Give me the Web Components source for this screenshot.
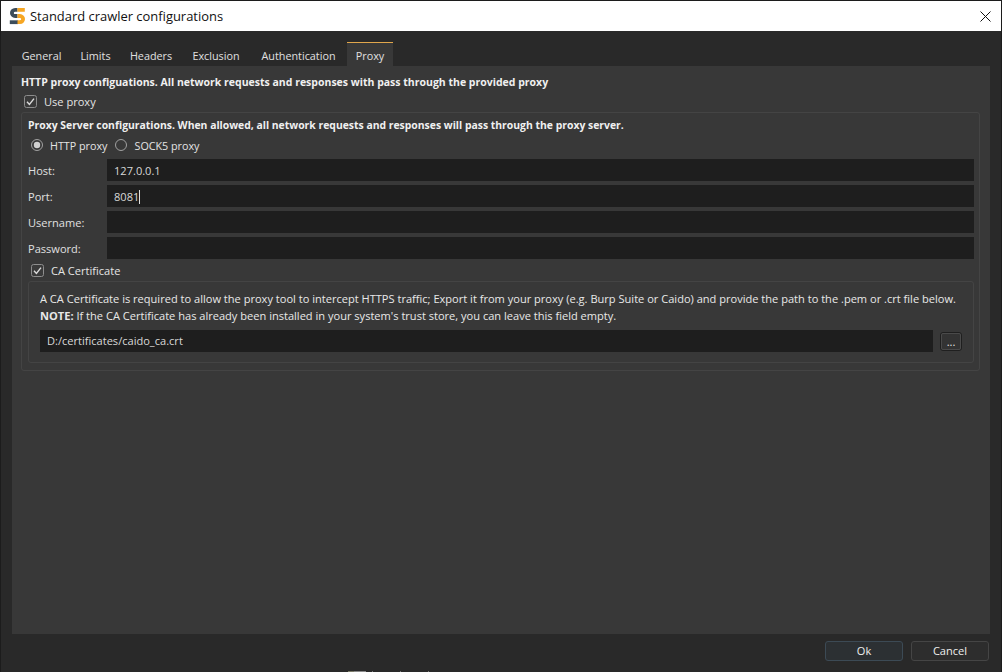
<!DOCTYPE html>
<html>
<head>
<meta charset="utf-8">
<title>Standard crawler configurations</title>
<style>
  html, body { margin: 0; height: 100%; background: #292929; }
  body { font: 11.07px "Open Sans", "Noto Sans", sans-serif; color: #e6e6e6; overflow: hidden; }
</style>
</head>
<body>
<dialog-window heading="Standard crawler configurations">
  <tab-bar slot="tabs" active="Proxy" tabs="General:59,Limits:49,Headers:62,Exclusion:68,Authentication:97,Proxy:46"></tab-bar>

  <panel-note bold>HTTP proxy configuations. All network requests and responses with pass through the provided proxy</panel-note>
  <check-row style="margin:4px 0 0 3px">Use proxy</check-row>

  <group-box style="margin-top:3px;padding:5px 5px 7px 6px">
    <panel-note bold style="font-size:10.4px">Proxy Server configurations. When allowed, all network requests and responses will pass through the proxy server.</panel-note>
    <radio-row></radio-row>
    <field-row label="Host:" value="127.0.0.1"></field-row>
    <field-row label="Port:" value="8081" caret></field-row>
    <field-row label="Username:"></field-row>
    <field-row label="Password:"></field-row>
    <check-row style="margin:4px 0 0 3px">CA Certificate</check-row>
    <group-box style="margin:3px 0 0 0;padding:9px 11px 10px 11px">
      <panel-note>A CA Certificate is required to allow the proxy tool to intercept HTTPS traffic; Export it from your proxy (e.g. Burp Suite or Caido) and provide the path to the .pem or .crt file below.</panel-note>
      <panel-note style="margin-top:2px"><b>NOTE:</b> If the CA Certificate has already been installed in your system's trust store, you can leave this field empty.</panel-note>
      <path-row value="D:/certificates/caido_ca.crt"></path-row>
    </group-box>
  </group-box>
</dialog-window>

<script>
// small helper, every element just renders once into an open shadow root
class Base extends HTMLElement {
  connectedCallback() {
    if (this.shadowRoot) return;
    this.attachShadow({ mode: 'open' }).innerHTML = this.render();
  }
}

class DialogWindow extends Base {
  render() {
    return `
      <style>
        :host { display: flex; flex-direction: column; position: relative; width: 1002px; height: 672px; box-sizing: border-box;
                background: #292929; border: 1px solid #1c1c1c; border-bottom: 0; }
        .title { flex: 0 0 30px; display: flex; align-items: center; background: #fff; color: #111;
                 font-size: 12.95px; }
        .title svg { margin-left: 8px; }
        .title span { margin-left: 4px; flex: 1; }
        .close { margin-right: 10px; display: block; }
        .tabs { flex: 0 0 35px; margin-left: 11px; display: flex; align-items: flex-end; }
        .panel { flex: 1; min-height: 0; margin: 0 11px; background: #383838; padding: 9px 10px 0 9px; }
        .foot { flex: 0 0 38px; box-sizing: border-box; display: flex; justify-content: flex-end; gap: 8px;
                padding: 7px 12px 0 0; }
        /* window behind the dialog peeks through on the last pixel row */
        .peek { position: absolute; left: 347px; bottom: 0; width: 84px; height: 1px;
                background: linear-gradient(90deg, #7a7a66 0 6px, #8a8a8a 6px 18px, transparent 18px),
                            repeating-linear-gradient(90deg, transparent 0 24px, #777 24px 25px, transparent 25px 28px); }
      </style>
      <div class="title">
        <svg width="17" height="18" viewBox="0 0 17 18" fill="none" stroke-width="3.8">
          <path d="M8.5 2.8H6.2C1.8 2.8 1.8 9 6.2 9H8.5" stroke="#3c4c5a"/>
          <path d="M9 15.2H.8" stroke="#3c4c5a"/>
          <path d="M8.5 2.8H15.8M8.5 9H10.8C15.2 9 15.2 15.2 10.8 15.2H8.5" stroke="#f6a623"/>
        </svg>
        <span>${this.getAttribute('heading')}</span>
        <svg class="close" width="11" height="11" viewBox="0 0 11 11" stroke="#111" stroke-width="1">
          <path d="M.5.5l10 10M10.5.5l-10 10"/>
        </svg>
      </div>
      <div class="tabs"><slot name="tabs"></slot></div>
      <div class="panel"><slot></slot></div>
      <div class="foot">
        <dlg-button primary>Ok</dlg-button>
        <dlg-button>Cancel</dlg-button>
      </div>
      <div class="peek"></div>`;
  }
}

class TabBar extends Base {
  render() {
    const active = this.getAttribute('active');
    const tabs = this.getAttribute('tabs').split(',').map(t => {
      const [name, width] = t.split(':');
      return `<div class="tab ${name === active ? 'on' : ''}" style="width:${width}px">${name}</div>`;
    }).join('');
    return `
      <style>
        :host { display: block; }
        .row { display: flex; }
        .tab { height: 23px; line-height: 25px; text-align: center; white-space: nowrap; color: #e0e0e0;
               font-size: 10.8px; border-top: 1px solid transparent; }
        .tab.on { background: #383838; border-top-color: #e0a64c; }
      </style>
      <div class="row">${tabs}</div>`;
  }
}

class PanelNote extends Base {
  render() {
    return `
      <style>
        :host { display: block; line-height: 15px; white-space: nowrap; color: #e8e8e8; }
        :host([bold]) { font-weight: 700; font-size: 10.5px; color: #f0f0f0; }
        b { color: #f4f4f4; }
      </style>
      <slot></slot>`;
  }
}

const tick = `<svg width="13" height="13" viewBox="0 0 13 13">
  <rect x=".5" y=".5" width="12" height="12" rx="2" fill="#3a3a3a" stroke="#8d8d8d"/>
  <path d="M3 6.8l2.4 2.6L10 3.6" fill="none" stroke="#dcdcdc" stroke-width="1.4"/></svg>`;

class CheckRow extends Base {
  render() {
    return `
      <style>
        :host { display: flex; align-items: center; gap: 7px; height: 15px; color: #e4e4e4; }
        svg { display: block; }
      </style>
      ${tick}<slot></slot>`;
  }
}

class RadioRow extends Base {
  render() {
    return `
      <style>
        :host { display: flex; align-items: center; height: 15px; margin: 4px 0 7px 3px; color: #e4e4e4; font-size: 10.75px; }
        svg { display: block; margin-right: 7px; }
        span { margin-right: 8px; padding-top: 2px; }
      </style>
      <svg width="12" height="12" viewBox="0 0 12 12"><circle cx="6" cy="6" r="5.5" fill="none" stroke="#a0a0a0"/><circle cx="6" cy="6" r="3.2" fill="#d0d0d0"/></svg>
      <span>HTTP proxy</span>
      <svg width="12" height="12" viewBox="0 0 12 12"><circle cx="6" cy="6" r="5.5" fill="none" stroke="#a0a0a0"/></svg>
      <span>SOCK5 proxy</span>`;
  }
}

class GroupBox extends Base {
  render() {
    return `<style>:host { display: block; border: 1px solid #444; border-radius: 3px; }</style><slot></slot>`;
  }
}

class FieldRow extends Base {
  render() {
    const caret = this.hasAttribute('caret') ? '<i></i>' : '';
    return `
      <style>
        :host { display: flex; height: 22px; margin-bottom: 4px; line-height: 24px; }
        label { flex: 0 0 79px; color: #e0e0e0; }
        .inp { flex: 1; background: #1e1e1e; padding: 2px 0 0 7px; color: #d8d8d8; display: flex; align-items: center; }
        i { width: 1px; height: 14px; background: #e0e0e0; }
      </style>
      <label>${this.getAttribute('label')}</label>
      <div class="inp">${this.getAttribute('value') || ''}${caret}</div>`;
  }
}

class PathRow extends Base {
  render() {
    return `
      <style>
        :host { display: flex; align-items: center; height: 22px; margin-top: 7px; gap: 7px; }
        .inp { flex: 1; height: 22px; line-height: 22px; background: #1e1e1e; padding-left: 7px; color: #d8d8d8; }
        .more { width: 20px; height: 17px; line-height: 17px; text-align: center; border: 1px solid #1f1f1f;
                outline: 1px solid #4a4a4a; outline-offset: -2px; border-radius: 3px; background: #333; color: #e0e0e0; }
      </style>
      <div class="inp">${this.getAttribute('value')}</div>
      <div class="more">...</div>`;
  }
}

class DlgButton extends Base {
  render() {
    return `
      <style>
        :host { display: block; box-sizing: border-box; width: 78px; height: 20px; line-height: 18px; text-align: center;
                border: 1px solid #454545; border-radius: 3px; background: #2d2d2d; color: #eee; }
        :host([primary]) { border-color: #3c4a55; background: #2c3033; }
      </style>
      <slot></slot>`;
  }
}

customElements.define('dialog-window', DialogWindow);
customElements.define('tab-bar', TabBar);
customElements.define('panel-note', PanelNote);
customElements.define('check-row', CheckRow);
customElements.define('radio-row', RadioRow);
customElements.define('group-box', GroupBox);
customElements.define('field-row', FieldRow);
customElements.define('path-row', PathRow);
customElements.define('dlg-button', DlgButton);
</script>
</body>
</html>
